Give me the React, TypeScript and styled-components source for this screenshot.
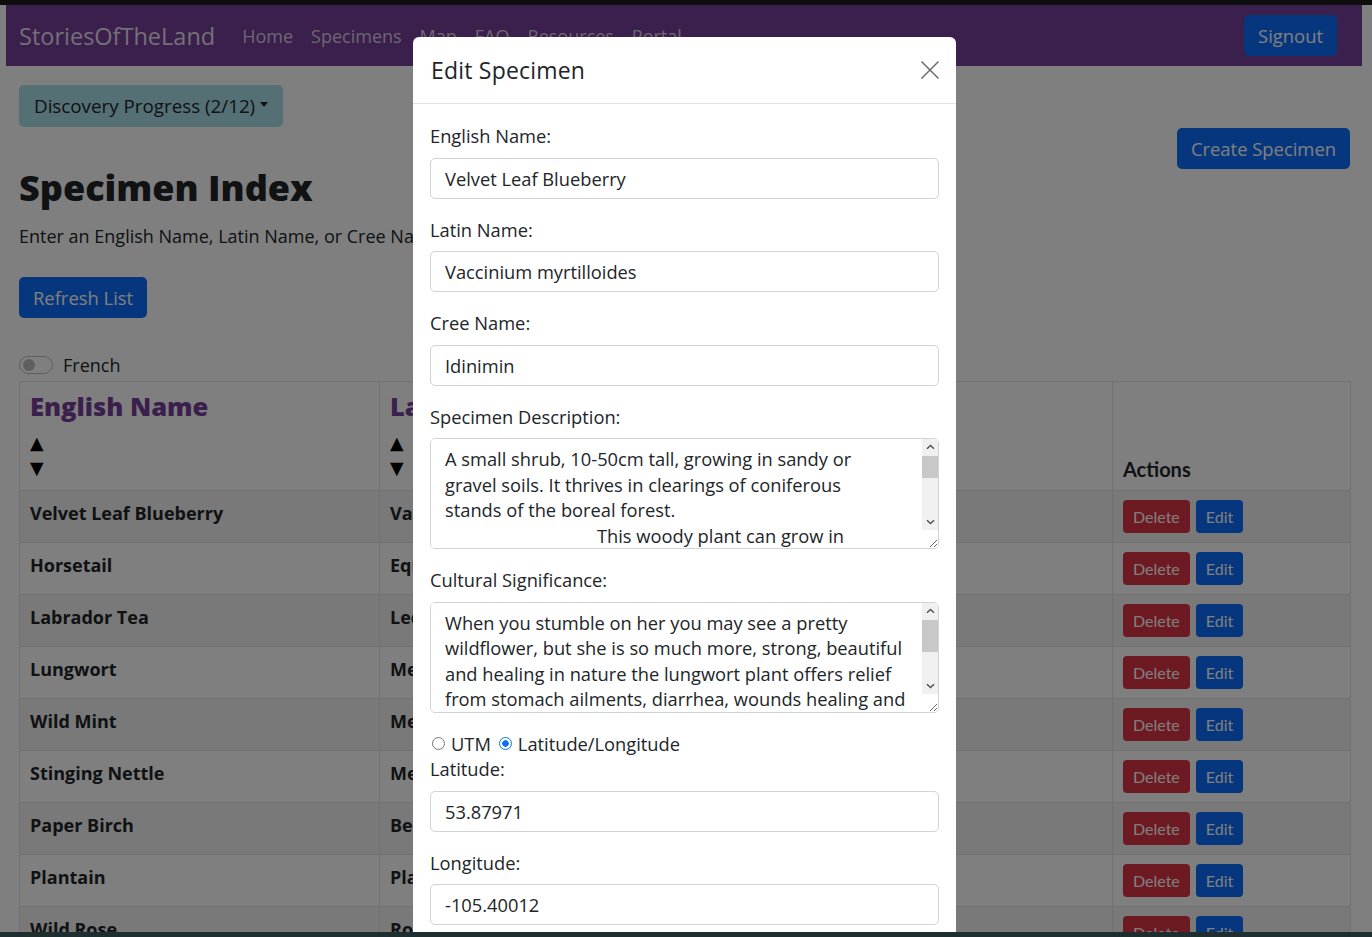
import React from "react";
import styled, { createGlobalStyle } from "styled-components";

const GlobalStyle = createGlobalStyle`
  * { box-sizing: border-box; }
  html, body { margin: 0; padding: 0; }
  body {
    font-family: "Open Sans", "Noto Sans", sans-serif;
    font-size: 18px;
    color: #212529;
    background: #111;
    overflow: hidden;
  }
`;

const Frame = styled.div`
  width: 1372px;
  height: 937px;
  display: flex;
  flex-direction: column;
`;

const TopStrip = styled.div`
  height: 5px;
  flex-shrink: 0;
  background: #0e0e0e;
`;

const BottomStrip = styled.div`
  height: 5px;
  flex-shrink: 0;
  background: #1f2e2e;
`;

const Viewport = styled.div`
  position: relative;
  height: 927px;
  overflow: hidden;
  background: #fff;
`;

/* ---------- navbar ---------- */

const Navbar = styled.nav`
  display: flex;
  align-items: center;
  height: 61px;
  margin: 0 10px 0 6px;
  padding: 0 25px 0 13px;
  background: #763e9a;
`;

const Brand = styled.a`
  font-size: 23.5px;
  color: rgba(255, 255, 255, 0.85);
  margin-right: 18px;
  text-decoration: none;
`;

const NavLinks = styled.div`
  display: flex;
  flex: 1;
`;

const NavLink = styled.a`
  font-size: 18px;
  color: rgba(255, 255, 255, 0.75);
  padding: 0 9px;
  text-decoration: none;
`;

const Button = styled.button<{ $variant?: "primary" | "danger"; $small?: boolean }>`
  font-family: ${(p) => (p.$small ? "Lato, sans-serif" : "inherit")};
  border: none;
  cursor: pointer;
  color: #fff;
  background: ${(p) => (p.$variant === "danger" ? "#dc3545" : "#0d6efd")};
  height: ${(p) => (p.$small ? "33px" : "41px")};
  padding: ${(p) => (p.$small ? "0 10px" : "0 14px")};
  font-size: ${(p) => (p.$small ? "16px" : "18.4px")};
  border-radius: ${(p) => (p.$small ? "4px" : "5px")};
`;

/* ---------- page ---------- */

const Main = styled.main`
  padding: 19px 22px 0 19px;
`;

const DiscoveryButton = styled.button`
  font-family: inherit;
  font-size: 18.8px;
  color: #212529;
  height: 42px;
  padding: 0 15px;
  border: none;
  border-radius: 5px;
  background: #aae0e8;
  display: inline-flex;
  align-items: center;
  &::after {
    content: "";
    margin-left: 5px;
    border-top: 5px solid #212529;
    border-left: 4.5px solid transparent;
    border-right: 4.5px solid transparent;
    transform: translateY(-2px);
  }
`;

const HeaderRow = styled.div`
  display: flex;
  justify-content: space-between;
  align-items: flex-start;
  margin-top: 1px;
`;

const TitleBlock = styled.div`
  padding-top: 38px;
`;

const Title = styled.h1`
  margin: 0;
  font-size: 36px;
  font-weight: 800;
  line-height: 44.4px;
  color: #212529;
`;

const Intro = styled.p`
  margin: 13px 0 27px;
  line-height: 26.4px;
`;

const SwitchRow = styled.label`
  display: flex;
  align-items: center;
  gap: 10px;
  height: 26.4px;
  margin: 34px 0 3px;
`;

const SwitchTrack = styled.span`
  position: relative;
  width: 34px;
  height: 18px;
  border-radius: 9px;
  border: 1px solid rgba(0, 0, 0, 0.25);
  &::after {
    content: "";
    position: absolute;
    left: 3px;
    top: 2px;
    width: 12px;
    height: 12px;
    border-radius: 50%;
    background: #bfbfbf;
  }
`;

const Table = styled.table`
  width: 1331px;
  table-layout: fixed;
  border-collapse: collapse;
`;

const HeadCell = styled.th`
  text-align: left;
  vertical-align: bottom;
  padding: 9px 10px;
  border: 1px solid #dee2e6;
  font-family: Lato, sans-serif;
  font-size: 20px;
  line-height: 1.2;
  font-weight: 700;
  color: #212529;
`;

const SortTitle = styled.div`
  font-family: "Open Sans", sans-serif;
  font-size: 25.5px;
  line-height: 30px;
  font-weight: 800;
  color: #763e9a;
  margin-bottom: 10px;
  white-space: nowrap;
`;

const Arrow = styled.div`
  font-family: "DejaVu Sans", sans-serif;
  font-size: 17.6px;
  line-height: 25px;
  font-weight: 400;
  color: #000;
`;

const Row = styled.tr<{ $odd: boolean }>`
  background: ${(p) => (p.$odd ? "rgba(0, 0, 0, 0.05)" : "transparent")};
`;

const Cell = styled.td`
  padding: 9px 10px;
  height: 52px;
  border: 1px solid #dee2e6;
  vertical-align: top;
  line-height: 27px;
  font-weight: 700;
  white-space: nowrap;
  overflow: hidden;
`;

const Actions = styled.div`
  display: flex;
  gap: 6px;
`;

/* ---------- modal ---------- */

const Backdrop = styled.div`
  position: absolute;
  inset: 0;
  background: rgba(0, 0, 0, 0.5);
  z-index: 10;
`;

const Modal = styled.div`
  position: absolute;
  top: 32px;
  left: 413px;
  width: 543px;
  background: #fff;
  border-radius: 6px;
  z-index: 11;
`;

const ModalHeader = styled.div`
  display: flex;
  align-items: center;
  justify-content: space-between;
  height: 67px;
  padding: 0 14px 0 18px;
  border-bottom: 1px solid #dee2e6;
`;

const ModalTitle = styled.h5`
  margin: 0;
  font-size: 23px;
  letter-spacing: 0.2px;
  font-weight: 400;
  line-height: 33px;
`;

const CloseButton = styled.button`
  width: 24px;
  height: 24px;
  padding: 0;
  border: none;
  background: none;
  display: flex;
  align-items: center;
  justify-content: center;
`;

const ModalBody = styled.div`
  padding: 19px 17px;
  font-size: 18.3px;
`;

const Field = styled.div`
  margin-bottom: 18px;
`;

const Label = styled.label`
  display: block;
  line-height: 25.5px;
  margin-bottom: 9px;
`;

const inputBase = `
  display: block;
  width: 100%;
  font-family: inherit;
  font-size: 18.3px;
  line-height: 25.5px;
  color: #212529;
  border: 1px solid #ced4da;
  border-radius: 5px;
  padding: 7px 14px;
  background: #fff;
  outline: none;
`;

const TextInput = styled.input`
  ${inputBase}
  height: 41px;
`;

const TextAreaWrap = styled.div`
  position: relative;
`;

const TextArea = styled.textarea`
  ${inputBase}
  height: 111px;
  padding-right: 28px;
  resize: vertical;
  white-space: pre-wrap;
  &::-webkit-scrollbar {
    display: none;
  }
`;

/* drawn scrollbar that sits over the textarea's right edge */
const ScrollBar = styled.div`
  position: absolute;
  top: 1px;
  right: 1px;
  width: 16px;
  height: 91px;
  display: flex;
  flex-direction: column;
  background: #f0f0f0;
  border-top-right-radius: 4px;
  pointer-events: none;
`;

const ScrollArrow = styled.div`
  height: 16px;
  flex-shrink: 0;
  display: flex;
  align-items: center;
  justify-content: center;
`;

const ScrollTrack = styled.div`
  flex: 1;
  padding-top: 1px;
`;

const ScrollThumb = styled.div<{ $size: number }>`
  height: ${(p) => p.$size}px;
  background: #c8c8c8;
`;

const Chevron = ({ down }: { down?: boolean }) => (
  <svg width="9" height="6" viewBox="0 0 9 6">
    <path
      d={down ? "M1 1.2 L4.5 4.6 L8 1.2" : "M1 4.8 L4.5 1.4 L8 4.8"}
      fill="none"
      stroke="#505050"
      strokeWidth="1.4"
    />
  </svg>
);

const ScrollingText = ({ value, thumb }: { value: string; thumb: number }) => (
  <TextAreaWrap>
    <TextArea defaultValue={value} />
    <ScrollBar>
      <ScrollArrow>
        <Chevron />
      </ScrollArrow>
      <ScrollTrack>
        <ScrollThumb $size={thumb} />
      </ScrollTrack>
      <ScrollArrow>
        <Chevron down />
      </ScrollArrow>
    </ScrollBar>
  </TextAreaWrap>
);

const RadioRow = styled.div`
  display: flex;
  align-items: center;
  height: 25.5px;
`;

const Radio = styled.input.attrs({ type: "radio" })`
  appearance: none;
  width: 13px;
  height: 13px;
  margin: 0 6px 0 2px;
  border-radius: 50%;
  border: 1px solid #767676;
  background: #fff;
  &:checked {
    border: 1.5px solid #0d6efd;
    background: radial-gradient(circle, #0d6efd 0 3px, #fff 3.5px);
  }
`;

const RadioText = styled.span`
  margin-right: 6px;
`;

const specimens = [
  ["Velvet Leaf Blueberry", "Vaccinium myrtilloides", "Idinimin"],
  ["Horsetail", "Equisetum arvense", ""],
  ["Labrador Tea", "Ledum groenlandicum", ""],
  ["Lungwort", "Mertensia paniculata", ""],
  ["Wild Mint", "Mentha arvensis", ""],
  ["Stinging Nettle", "Medicinal nettle", ""],
  ["Paper Birch", "Betula papyrifera", ""],
  ["Plantain", "Plantago major", ""],
  ["Wild Rose", "Rosa acicularis", ""],
  ["Yarrow", "Achillea millefolium", ""],
];

const description =
  "A small shrub, 10-50cm tall, growing in sandy or\ngravel soils. It thrives in clearings of coniferous\nstands of the boreal forest.\n" +
  " ".repeat(32) +
  "This woody plant can grow in\ndense low patches, spreading by underground stems. Its leaves are soft and hairy, giving the plant its name. Small white bell-shaped flowers bloom in early summer, followed by sweet blue berries that ripen in July and August. The berries are gathered by families every year and eaten fresh, dried or cooked.";

const significance =
  "When you stumble on her you may see a pretty\nwildflower, but she is so much more, strong, beautiful\nand healing in nature the lungwort plant offers relief\nfrom stomach ailments, diarrhea, wounds healing and respiratory problems such as coughs and colds. Her leaves and flowers have long been gathered and shared.";

const SortHeader = ({ title }: { title: string }) => (
  <HeadCell>
    <SortTitle>{title}</SortTitle>
    <Arrow>▲</Arrow>
    <Arrow>▼</Arrow>
  </HeadCell>
);

export default function App() {
  return (
    <>
      <GlobalStyle />
      <Frame>
        <TopStrip />
        <Viewport>
          <Navbar>
            <Brand>StoriesOfTheLand</Brand>
            <NavLinks>
              {["Home", "Specimens", "Map", "FAQ", "Resources", "Portal"].map((l) => (
                <NavLink key={l}>{l}</NavLink>
              ))}
            </NavLinks>
            <Button>Signout</Button>
          </Navbar>

          <Main>
            <DiscoveryButton>Discovery Progress (2/12)</DiscoveryButton>
            <HeaderRow>
              <TitleBlock>
                <Title>Specimen Index</Title>
                <Intro>Enter an English Name, Latin Name, or Cree Name to search for a specimen.</Intro>
                <Button>Refresh List</Button>
              </TitleBlock>
              <Button>Create Specimen</Button>
            </HeaderRow>

            <SwitchRow>
              <SwitchTrack />
              French
            </SwitchRow>

            <Table>
              <colgroup>
                <col style={{ width: 360 }} />
                <col style={{ width: 320 }} />
                <col style={{ width: 413 }} />
                <col style={{ width: 238 }} />
              </colgroup>
              <thead>
                <tr>
                  <SortHeader title="English Name" />
                  <SortHeader title="Latin Name" />
                  <SortHeader title="Cree Name" />
                  <HeadCell>Actions</HeadCell>
                </tr>
              </thead>
              <tbody>
                {specimens.map(([en, la, cr], i) => (
                  <Row key={en} $odd={i % 2 === 0}>
                    <Cell>{en}</Cell>
                    <Cell>{la}</Cell>
                    <Cell>{cr}</Cell>
                    <Cell>
                      <Actions>
                        <Button $small $variant="danger">Delete</Button>
                        <Button $small>Edit</Button>
                      </Actions>
                    </Cell>
                  </Row>
                ))}
              </tbody>
            </Table>
          </Main>

          <Backdrop />

          <Modal>
            <ModalHeader>
              <ModalTitle>Edit Specimen</ModalTitle>
              <CloseButton aria-label="Close">
                <svg width="20" height="20" viewBox="0 0 20 20">
                  <path d="M1.5 1.5 L18.5 18.5 M18.5 1.5 L1.5 18.5" stroke="#707070" strokeWidth="1.6" />
                </svg>
              </CloseButton>
            </ModalHeader>
            <ModalBody>
              <Field>
                <Label>English Name:</Label>
                <TextInput defaultValue="Velvet Leaf Blueberry" />
              </Field>
              <Field>
                <Label>Latin Name:</Label>
                <TextInput defaultValue="Vaccinium myrtilloides" />
              </Field>
              <Field>
                <Label>Cree Name:</Label>
                <TextInput defaultValue="Idinimin" />
              </Field>
              <Field>
                <Label>Specimen Description:</Label>
                <ScrollingText value={description} thumb={22} />
              </Field>
              <Field>
                <Label>Cultural Significance:</Label>
                <ScrollingText value={significance} thumb={32} />
              </Field>
              <RadioRow>
                <Radio name="coords" />
                <RadioText>UTM</RadioText>
                <Radio name="coords" defaultChecked />
                <RadioText>Latitude/Longitude</RadioText>
              </RadioRow>
              <Field>
                <Label>Latitude:</Label>
                <TextInput defaultValue="53.87971" />
              </Field>
              <Field>
                <Label>Longitude:</Label>
                <TextInput defaultValue="-105.40012" />
              </Field>
            </ModalBody>
          </Modal>
        </Viewport>
        <BottomStrip />
      </Frame>
    </>
  );
}
